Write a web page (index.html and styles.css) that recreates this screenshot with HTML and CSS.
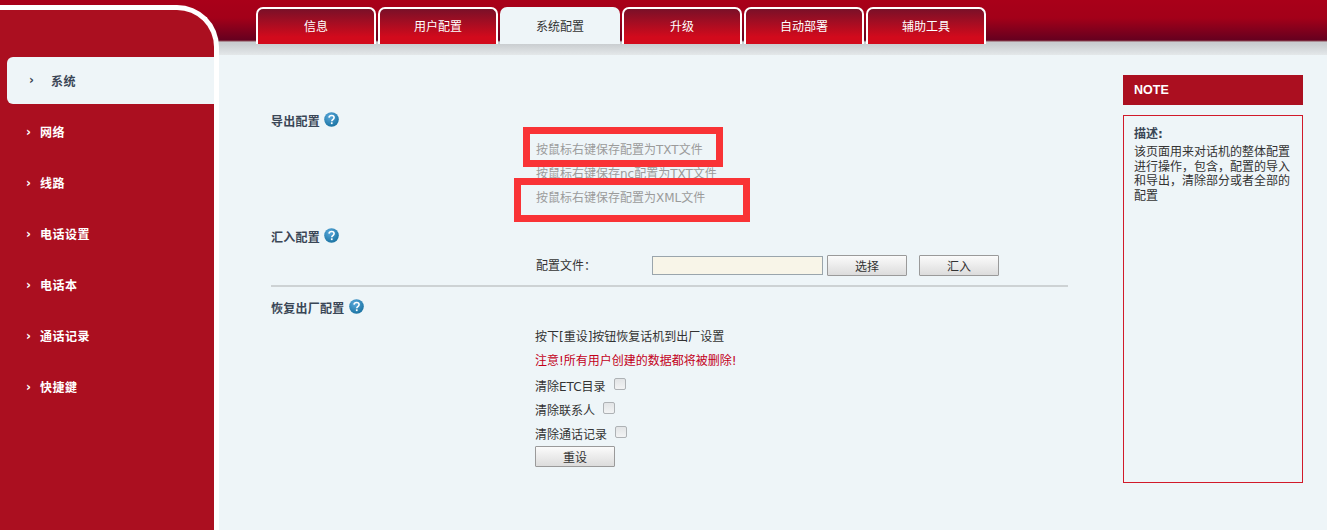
FILE: index.html
```html
<!DOCTYPE html>
<html lang="zh">
<head>
<meta charset="utf-8">
<title>系统配置</title>
<link rel="stylesheet" href="styles.css">
</head>
<body>
<svg class="defs" width="0" height="0" aria-hidden="true">
  <defs>
    <radialGradient id="helpfill" cx="40%" cy="30%" r="75%">
      <stop offset="0" stop-color="#5aa9dc"/>
      <stop offset="1" stop-color="#17709f"/>
    </radialGradient>
    <symbol id="help" viewBox="0 0 15 15">
      <circle cx="7.5" cy="7.5" r="7.3" fill="url(#helpfill)"/>
      <path d="M5 5.6c.2-1.4 1.2-2.1 2.6-2.1 1.500 0 2.500.9 2.500 2.100 0 1-.6 1.500-1.300 2-.7.5-1 .8-1 1.700" fill="none" stroke="#fff" stroke-width="1.600"/>
      <rect x="6.900" y="10.300" width="1.700" height="1.800" fill="#fff"/>
    </symbol>
  </defs>
</svg>
<div class="page">
  <header class="topbar">
    <nav class="tabs">
      <a class="tab">信息</a>
      <a class="tab">用户配置</a>
      <a class="tab active">系统配置</a>
      <a class="tab">升级</a>
      <a class="tab">自动部署</a>
      <a class="tab">辅助工具</a>
    </nav>
  </header>

  <aside class="sidebar">
    <ul class="menu">
      <li class="menu-item current"><span class="chev">›</span>系统</li>
      <li class="menu-item"><span class="chev">›</span>网络</li>
      <li class="menu-item"><span class="chev">›</span>线路</li>
      <li class="menu-item"><span class="chev">›</span>电话设置</li>
      <li class="menu-item"><span class="chev">›</span>电话本</li>
      <li class="menu-item"><span class="chev">›</span>通话记录</li>
      <li class="menu-item"><span class="chev">›</span>快捷鍵</li>
    </ul>
  </aside>

  <main class="main">
    <div class="content">
      <h2 class="heading">导出配置<svg class="help"><use href="#help"/></svg></h2>
      <div class="exports">
        <a class="export">按鼠标右键保存配置为TXT文件</a>
        <a class="export">按鼠标右键保存nc配置为TXT文件</a>
        <a class="export">按鼠标右键保存配置为XML文件</a>
        <span class="mark mark-a"></span>
        <span class="mark mark-b"></span>
      </div>

      <h2 class="heading heading-import">汇入配置<svg class="help"><use href="#help"/></svg></h2>
      <div class="file-row">
        <label class="file-label">配置文件：</label>
        <input class="file-input" type="text">
        <button class="btn" type="button">选择</button>
        <button class="btn btn-far" type="button">汇入</button>
      </div>

      <hr class="rule">

      <h2 class="heading heading-reset">恢复出厂配置<svg class="help"><use href="#help"/></svg></h2>
      <div class="reset">
        <p class="line">按下[重设]按钮恢复话机到出厂设置</p>
        <p class="line warn">注意!所有用户创建的数据都将被删除!</p>
        <label class="line option first">清除ETC目录<input class="check" type="checkbox"></label>
        <label class="line option">清除联系人<input class="check" type="checkbox"></label>
        <label class="line option">清除通话记录<input class="check" type="checkbox"></label>
        <button class="btn" type="button">重设</button>
      </div>
    </div>

    <section class="note">
      <h3 class="note-title">NOTE</h3>
      <div class="note-box">
        <strong class="note-head">描述:</strong>
        <p class="note-text">该页面用来对话机的整体配置进行操作，包含，配置的导入和导出，清除部分或者全部的配置</p>
      </div>
    </section>
  </main>
</div>
</body>
</html>
```
FILE: styles.css
```css
* { box-sizing: border-box; }
html, body { margin: 0; height: 100%; }
body {
  background: #eef5f8;
  color: #333;
  font: 12px/24px "DejaVu Sans", "Noto Sans CJK SC", sans-serif;
  overflow: hidden;
}
.defs { position: absolute; }
.page {
  display: grid;
  grid-template-columns: 219px 1fr;
  grid-template-rows: 55px 1fr;
  height: 530px;
}
.topbar {
  grid-column: 1 / -1;
  grid-row: 1;
  background:
    linear-gradient(to bottom, #a90019 0, #a30019 18px, #66001f 40px, #8a4a55 41px, #c9cccf 42px, #c9cdd0 44px, #e4e8ea 55px);
  padding: 7px 0 0 256px;
}
.tabs { display: flex; gap: 2px; }
.tab {
  width: 120px;
  height: 37px;
  border: 2px solid #fff;
  border-bottom: 0;
  border-radius: 7px 7px 0 0;
  background: linear-gradient(to bottom, #7a1028 0, #d20a1c 80%);
  color: #fff;
  text-align: center;
  line-height: 36px;
}
.tab.active {
  background: #eef5f8;
  border-color: #eef5f8;
  color: #333;
}
.sidebar {
  grid-column: 1;
  grid-row: 1 / 3;
  z-index: 1;
  margin-top: 5px;
  background: #ab0f20;
  border: solid #fff;
  border-width: 5px 5px 0 0;
  border-top-right-radius: 42px;
  padding-top: 47px;
}
.menu { list-style: none; margin: 0; padding: 0 0 0 7px; }
.menu-item {
  height: 51px;
  line-height: 53px;
  padding-left: 19px;
  color: #fff;
  font-weight: 700;
  letter-spacing: .5px;
}
.menu-item.current {
  height: 47px;
  line-height: 50px;
  margin-bottom: 3px;
  padding-left: 22px;
  background: #eef5f8;
  color: #3a4656;
  border-radius: 6px 0 0 6px;
}
.chev {
  display: inline-block;
  width: 14px;
  font-weight: 700;
  line-height: 1;
  vertical-align: 1px;
}
.current .chev { width: 22px; vertical-align: 2px; }
.main {
  grid-column: 2;
  grid-row: 2;
  display: flex;
  align-items: flex-start;
  padding: 0 0 0 52px;
  gap: 55px;
}
.content { width: 797px; padding-top: 54px; }
.heading {
  display: flex;
  align-items: center;
  height: 22px;
  margin: 0;
  padding-top: 4px;
  font-size: 12px;
  font-weight: 700;
  letter-spacing: .25px;
  color: #3a4656;
}
.heading-import { margin-top: 16px; }
.heading-reset { margin-top: 9px; }
.help { width: 15px; height: 15px; margin: -6px 0 0 4px; }
.exports {
  position: relative;
  display: flex;
  flex-direction: column;
  margin: 6px 0 0 265px;
}
.export { color: #9b9b9b; height: 24px; line-height: 26px; }
.mark { position: absolute; border: 7px solid #f93336; }
.mark-a { left: -13px; top: -10px; width: 200px; height: 40px; }
.mark-b { left: -22px; top: 41px; width: 236px; height: 44px; }
.file-row {
  display: flex;
  align-items: center;
  height: 22px;
  margin: 7px 0 0 265px;
}
.file-label { width: 116px; padding-top: 2px; }
.file-input {
  width: 171px;
  height: 19px;
  margin-right: 4px;
  padding: 0;
  border: 1px solid #9aa5ac;
  background: #f8f5e8;
}
.btn {
  width: 80px;
  height: 21px;
  padding: 2px 0 0;
  border: 1px solid #9a9a9a;
  border-radius: 1px;
  background: linear-gradient(to bottom, #fbfbfb, #dcdcdc);
  color: #333;
  font: inherit;
  line-height: 19px;
}
.btn-far { margin-left: 12px; }
.rule {
  height: 2px;
  margin: 9px 0 0;
  border: 0;
  background: #cdd2d4;
}
.reset {
  display: flex;
  flex-direction: column;
  align-items: flex-start;
  margin: 6px 0 0 264px;
}
.line { height: 24px; margin: 0; line-height: 26px; }
.warn { color: #c3001a; }
.option { display: flex; align-items: flex-start; gap: 8px; }
.option.first { margin-top: 2px; }
.check {
  appearance: none;
  width: 12px;
  height: 12px;
  margin: 4px 0 0;
  border: 1px solid #aeb2b5;
  border-radius: 2px;
  background: linear-gradient(to bottom, #e2e4e6, #f2f3f4);
}
.note { width: 180px; padding-top: 20px; }
.note-title {
  height: 30px;
  margin: 0 0 10px;
  padding-left: 11px;
  background: #ab0f20;
  color: #fff;
  font: 700 12.500px/30px "Liberation Sans", sans-serif;
}
.note-box {
  height: 368px;
  padding: 10px 10px 0;
  border: 1px solid #d11a2a;
}
.note-head {
  display: block;
  height: 19px;
  line-height: 17px;
  color: #3a4656;
}
.note-text { margin: 0; line-height: 14.500px; }
```
